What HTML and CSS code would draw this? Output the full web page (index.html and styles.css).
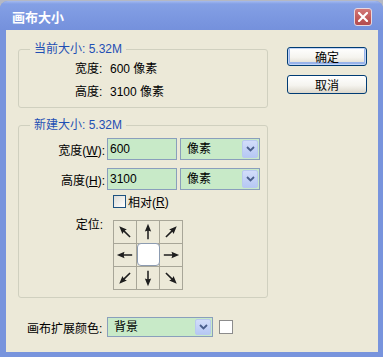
FILE: index.html
```html
<!DOCTYPE html>
<html lang="zh-CN">
<head>
  <meta charset="UTF-8">
  <title>画布大小</title>
  <link rel="stylesheet" href="styles.css">
</head>
<body>
  <div class="window">
    <!-- Title bar -->
    <div class="titlebar">
      <span class="title">画布大小</span>
      <button class="close-btn" aria-label="关闭">
        <svg width="10" height="10" viewBox="0 0 10 10"><path d="M1 1 L9 9 M9 1 L1 9" stroke="#fff" stroke-width="2.2" stroke-linecap="square"/></svg>
      </button>
    </div>

    <!-- Dialog body -->
    <div class="client">
      <div class="main-col">
        <fieldset class="group group-current">
          <legend>当前大小: 5.32M</legend>
          <div class="info-row"><span class="info-label">宽度:</span>600 像素</div>
          <div class="info-row"><span class="info-label">高度:</span>3100 像素</div>
        </fieldset>

        <fieldset class="group group-new">
          <legend>新建大小: 5.32M</legend>
          <div class="field-row">
            <span class="field-label">宽度(<u>W</u>):</span>
            <div class="text-input">600</div>
            <div class="combo"><span class="combo-text">像素</span><span class="combo-btn"><svg width="9" height="6" viewBox="0 0 9 6"><path d="M1 1 L4.5 4.5 L8 1" fill="none" stroke="#4a5f8c" stroke-width="1.8"/></svg></span></div>
          </div>
          <div class="field-row row-gap">
            <span class="field-label">高度(<u>H</u>):</span>
            <div class="text-input">3100</div>
            <div class="combo"><span class="combo-text">像素</span><span class="combo-btn"><svg width="9" height="6" viewBox="0 0 9 6"><path d="M1 1 L4.5 4.5 L8 1" fill="none" stroke="#4a5f8c" stroke-width="1.8"/></svg></span></div>
          </div>
          <div class="check-row">
            <span class="checkbox"></span>相对(<u>R</u>)
          </div>
          <div class="anchor-row">
            <span class="anchor-label">定位:</span>
            <div class="anchor-grid">
              <div class="cell"><svg class="arrow rot-315" viewBox="0 0 23 23"><path d="M11.5 3 L14.8 11 L12.3 10.2 L12.3 19 L10.7 19 L10.7 10.2 L8.2 11 Z"/></svg></div>
              <div class="cell"><svg class="arrow" viewBox="0 0 23 23"><path d="M11.5 3 L14.8 11 L12.3 10.2 L12.3 19 L10.7 19 L10.7 10.2 L8.2 11 Z"/></svg></div>
              <div class="cell"><svg class="arrow rot-45" viewBox="0 0 23 23"><path d="M11.5 3 L14.8 11 L12.3 10.2 L12.3 19 L10.7 19 L10.7 10.2 L8.2 11 Z"/></svg></div>
              <div class="cell"><svg class="arrow rot-270" viewBox="0 0 23 23"><path d="M11.5 3 L14.8 11 L12.3 10.2 L12.3 19 L10.7 19 L10.7 10.2 L8.2 11 Z"/></svg></div>
              <div class="cell cell-center"><span class="center-box"></span></div>
              <div class="cell"><svg class="arrow rot-90" viewBox="0 0 23 23"><path d="M11.5 3 L14.8 11 L12.3 10.2 L12.3 19 L10.7 19 L10.7 10.2 L8.2 11 Z"/></svg></div>
              <div class="cell"><svg class="arrow rot-225" viewBox="0 0 23 23"><path d="M11.5 3 L14.8 11 L12.3 10.2 L12.3 19 L10.7 19 L10.7 10.2 L8.2 11 Z"/></svg></div>
              <div class="cell"><svg class="arrow rot-180" viewBox="0 0 23 23"><path d="M11.5 3 L14.8 11 L12.3 10.2 L12.3 19 L10.7 19 L10.7 10.2 L8.2 11 Z"/></svg></div>
              <div class="cell"><svg class="arrow rot-135" viewBox="0 0 23 23"><path d="M11.5 3 L14.8 11 L12.3 10.2 L12.3 19 L10.7 19 L10.7 10.2 L8.2 11 Z"/></svg></div>
            </div>
          </div>
        </fieldset>

        <div class="bottom-row">
          <span class="bottom-label">画布扩展颜色:</span>
          <div class="combo combo-wide"><span class="combo-text">背景</span><span class="combo-btn"><svg width="9" height="6" viewBox="0 0 9 6"><path d="M1 1 L4.5 4.5 L8 1" fill="none" stroke="#4a5f8c" stroke-width="1.8"/></svg></span></div>
          <span class="swatch"></span>
        </div>
      </div>

      <div class="button-col">
        <button class="btn btn-default">确定</button>
        <button class="btn">取消</button>
      </div>
    </div>
  </div>
</body>
</html>
```

FILE: styles.css
```css
* {
  margin: 0;
  padding: 0;
  box-sizing: border-box;
}

body {
  font-family: "Liberation Sans", "Noto Sans CJK SC", sans-serif;
  font-size: 12px;
  color: #000;
  background-color: #b4b8c4;
  overflow: hidden;
}

/* Window frame */
.window {
  width: 383px;
  height: 356px;
  margin-top: 1px;
  background-color: #7894dd;
  border-radius: 8px 8px 0 0;
  display: flex;
  flex-direction: column;
}

.titlebar {
  height: 29px;
  display: flex;
  align-items: center;
  justify-content: space-between;
  padding: 0 11px 0 12px;
  border-radius: 8px 8px 0 0;
  background: linear-gradient(#a3b9f0 0, #84a0e5 3px, #7b97e0 60%, #7591dc 100%);
}

.title {
  color: #fff;
  font-family: "Noto Sans CJK SC", sans-serif;
  font-size: 13px;
  font-weight: bold;
  margin-top: 1px;
}

.close-btn {
  width: 18px;
  height: 18px;
  margin-top: 2px;
  border: 1px solid #e8d8e0;
  border-radius: 3px;
  background: linear-gradient(#d27878, #c05858 60%, #b34c50);
  display: flex;
  align-items: center;
  justify-content: center;
}

/* Client area */
.client {
  flex: 1;
  margin: 0 5px 5px 6px;
  background-color: #ece9d8;
  display: flex;
  padding: 12px 0 0 12px;
}

.main-col {
  width: 250px;
  display: flex;
  flex-direction: column;
}

.group {
  width: 250px;
  border: 1px solid #d0d0bf;
  border-radius: 3px;
  padding-left: 11px;
}

.group legend {
  color: #1f4fb4;
  line-height: 14px;
  padding: 0 4px;
}

.group-current {
  padding-top: 2px;
  padding-bottom: 3px;
}

.info-row {
  line-height: 23px;
  padding-left: 45px;
}

.info-label {
  display: inline-block;
  width: 35px;
}

.group-new {
  margin-top: 10px;
  padding-top: 6px;
  padding-bottom: 7px;
}

.field-row {
  display: flex;
  align-items: center;
  height: 22px;
}

.row-gap {
  margin-top: 8px;
}

.field-label {
  width: 75px;
  text-align: right;
}

.text-input {
  width: 70px;
  height: 22px;
  margin-left: 2px;
  padding-left: 2px;
  line-height: 20px;
  border: 1px solid #8a9fbc;
  background-color: #c8eac8;
}

.combo {
  width: 80px;
  height: 22px;
  margin-left: 3px;
  border: 1px solid #8a9fbc;
  background-color: #c8eac8;
  display: flex;
  align-items: stretch;
  padding: 1px;
}

.combo-text {
  flex: 1;
  padding-left: 5px;
  line-height: 18px;
}

.combo-btn {
  width: 16px;
  border: 1px solid #b9c9ef;
  border-radius: 2px;
  background: linear-gradient(#d2ddfa, #b6c8f4);
  display: flex;
  align-items: center;
  justify-content: center;
}

.check-row {
  display: flex;
  align-items: center;
  margin-top: 5px;
  padding-left: 83px;
  height: 13px;
}

.checkbox {
  width: 13px;
  height: 13px;
  border: 1px solid #1c5180;
  background: linear-gradient(135deg, #dcdcd6, #fff);
  margin-right: 2px;
}

/* Anchor picker */
.anchor-row {
  display: flex;
  margin-top: 12px;
}

.anchor-label {
  width: 73px;
  text-align: right;
  line-height: 14px;
  margin-top: -2px;
}

.anchor-grid {
  margin-left: 10px;
  width: 70px;
  height: 70px;
  display: grid;
  grid-template-columns: repeat(3, 23px);
  grid-template-rows: repeat(3, 23px);
  border-left: 1px solid #a8a698;
  border-top: 1px solid #a8a698;
}

.cell {
  border-right: 1px solid #a8a698;
  border-bottom: 1px solid #a8a698;
  display: flex;
  align-items: center;
  justify-content: center;
}

.center-box {
  width: 23px;
  height: 23px;
  margin: -1px -1px 0 0;
  background-color: #fff;
  border: 1px solid #8c9bb0;
  border-radius: 4px;
}

.arrow {
  width: 22px;
  height: 22px;
  fill: #1e1e1e;
}

.rot-45 { transform: rotate(45deg); }
.rot-90 { transform: rotate(90deg); }
.rot-135 { transform: rotate(135deg); }
.rot-180 { transform: rotate(180deg); }
.rot-225 { transform: rotate(225deg); }
.rot-270 { transform: rotate(270deg); }
.rot-315 { transform: rotate(315deg); }

/* Bottom row */
.bottom-row {
  display: flex;
  align-items: center;
  margin-top: 19px;
  padding-left: 9px;
}

.bottom-label {
  width: 77px;
}

.combo-wide {
  width: 106px;
  height: 20px;
}

.combo-wide .combo-text {
  line-height: 16px;
}

.swatch {
  width: 14px;
  height: 14px;
  margin-left: 6px;
  border: 1px solid #8c8c8c;
  background-color: #fff;
}

/* Buttons */
.button-col {
  display: flex;
  flex-direction: column;
  gap: 9px;
  margin-left: 19px;
  margin-top: 5px;
}

.btn {
  width: 80px;
  height: 19px;
  font: inherit;
  color: #000;
  border: 1px solid #003c74;
  border-radius: 3px;
  background: linear-gradient(#ffffff, #f5f4ef 55%, #dcd7cb);
}

.btn-default {
  box-shadow: inset 0 0 0 1px #c2d4f6, inset 0 -1px 0 2px #98b3ea;
}
```
